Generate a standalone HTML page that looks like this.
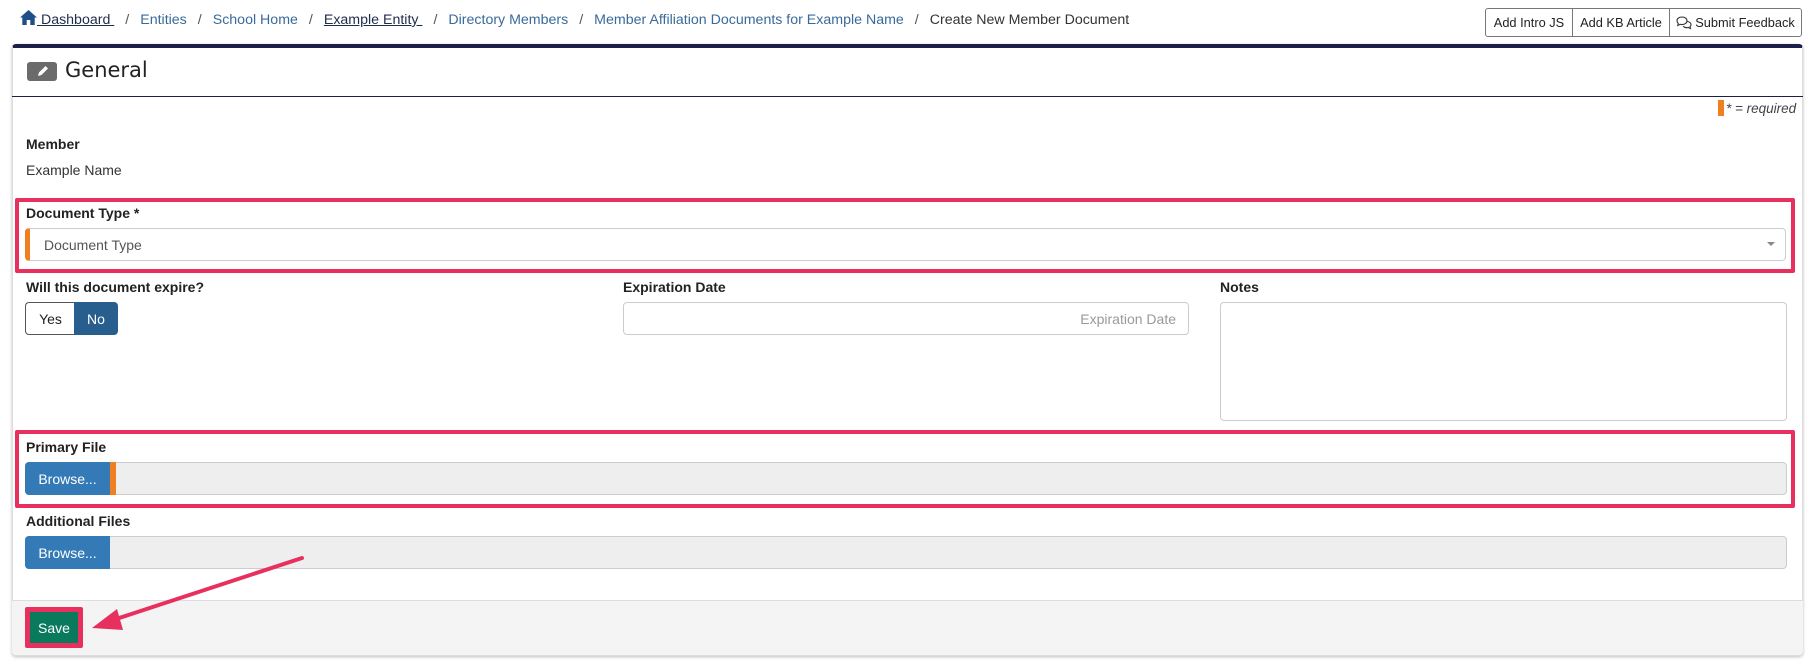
<!DOCTYPE html>
<html><head><meta charset="utf-8"><style>
*{box-sizing:border-box;margin:0;padding:0}
body{width:1815px;height:665px;background:#fff;font-family:"Liberation Sans",Arial,sans-serif;color:#333;position:relative;overflow:hidden;font-size:15px}
.a{position:absolute}
.bc{top:10px;left:20px;font-size:14.2px;color:#3a6a9a;white-space:nowrap}
.bc .s{color:#555;margin:0 11px}
.bc u{color:#1f2d4a}
.btns{top:8px;left:1485px;width:317px;height:29px;border:1px solid #777;border-radius:3px;display:flex;font-size:12.8px;color:#222}
.btns div{display:flex;align-items:center;justify-content:center;border-right:1px solid #777;height:100%}
.btns div:last-child{border-right:none}
.panel{left:12px;top:44px;width:1791px;height:612px;border:1px solid #ddd;border-top:4px solid #1c1f4a;border-radius:4px;box-shadow:0 1px 3px rgba(0,0,0,.25);background:#fff}
.lbl{font-weight:bold;font-size:14px;color:#222}
.inp{border:1px solid #ccc;border-radius:4px;background:#fff}
.red{border:4px solid #e8305f;border-radius:2px}
.browse{background:#337ab7;color:#fff;font-size:14px;display:flex;align-items:center;justify-content:center;border-radius:4px 0 0 4px}
.file{background:#eee;border:1px solid #ccc;border-radius:4px}
</style></head><body>
<div class="a bc"><svg width="17" height="15" viewBox="0 0 17 15" style="vertical-align:-1px"><path d="M8.5 0L0 7.5h2.3V15h4.4v-5h3.6v5h4.4V7.5H17z" fill="#1f4e89"/></svg><u> Dashboard </u><span class="s">/</span>Entities<span class="s">/</span>School Home<span class="s">/</span><u>Example Entity </u><span class="s">/</span>Directory Members<span class="s">/</span>Member Affiliation Documents for Example Name<span class="s">/</span><span style="color:#333">Create New Member Document</span></div>
<div class="a btns"><div style="width:87px">Add Intro JS</div><div style="width:97px">Add KB Article</div><div style="flex:1"><svg width="16" height="14" viewBox="0 0 16 14" style="margin-right:3px"><path d="M6 1C3 1 1 2.7 1 4.8c0 1 .5 1.9 1.3 2.6L1.8 9.5 4.3 8.3c.5.2 1.1.3 1.7.3 3 0 5-1.7 5-3.8S9 1 6 1z" fill="none" stroke="#333" stroke-width="1.1"/><path d="M11.5 5.5c2 .4 3.5 1.7 3.5 3.2 0 .8-.4 1.5-1 2l.5 1.8-2.1-1c-.5.1-.9.2-1.4.2-1.6 0-3-.6-3.8-1.6" fill="none" stroke="#333" stroke-width="1.1"/></svg>Submit Feedback</div></div>
<div class="a panel"></div>
<div class="a" style="left:12px;top:600px;width:1791px;height:55px;background:#f4f4f4;border-top:1px solid #ddd;border-radius:0 0 4px 4px"></div>
<div class="a" style="left:27px;top:62px;width:30px;height:19px;background:#6b6b6b;border-radius:3px"><svg width="30" height="19" viewBox="0 0 30 19"><path d="M11 14l1-3.5 6.5-6.5 2.5 2.5-6.5 6.5z" fill="#fff"/></svg></div>
<div class="a" style="left:65px;top:58px;font-size:21px;color:#222;font-family:'DejaVu Sans','Liberation Sans',sans-serif">General</div>
<div class="a" style="left:12px;top:96px;width:1791px;height:1px;background:#1c1f4a"></div>
<div class="a" style="left:1718px;top:100px;width:6px;height:16px;background:#f07f22"></div>
<div class="a" style="left:1726px;top:101px;font-size:13.5px;font-style:italic;color:#444">* = required</div>
<div class="a lbl" style="left:26px;top:136px">Member</div>
<div class="a" style="left:26px;top:162px;font-size:14px;color:#333">Example Name</div>
<div class="a red" style="left:15px;top:198px;width:1780px;height:75px"></div>
<div class="a lbl" style="left:26px;top:205px">Document Type *</div>
<div class="a inp" style="left:25px;top:228px;width:1761px;height:33px;border-left:5px solid #f07f22;color:#555;font-size:14px;padding:8px 0 0 14px">Document Type</div>
<div class="a" style="left:1767px;top:242px;border:4px solid transparent;border-top:4px solid #888;border-bottom:none"></div>
<div class="a lbl" style="left:26px;top:279px">Will this document expire?</div>
<div class="a" style="left:25px;top:302px;width:50px;height:33px;border:1px solid #555;border-right:none;border-radius:4px 0 0 4px;display:flex;align-items:center;justify-content:center;font-size:14px;color:#222">Yes</div>
<div class="a" style="left:74px;top:302px;width:44px;height:33px;background:#285e8e;border-radius:0 4px 4px 0;display:flex;align-items:center;justify-content:center;font-size:14px;color:#fff">No</div>
<div class="a lbl" style="left:623px;top:279px">Expiration Date</div>
<div class="a inp" style="left:623px;top:302px;width:566px;height:33px;color:#999;font-size:14px;text-align:right;padding:8px 12px 0 0">Expiration Date</div>
<div class="a lbl" style="left:1220px;top:279px">Notes</div>
<div class="a inp" style="left:1220px;top:302px;width:567px;height:119px"></div>
<div class="a red" style="left:15px;top:430px;width:1780px;height:78px"></div>
<div class="a lbl" style="left:26px;top:439px">Primary File</div>
<div class="a file" style="left:25px;top:462px;width:1762px;height:33px"></div>
<div class="a browse" style="left:25px;top:462px;width:85px;height:33px">Browse...</div>
<div class="a" style="left:110px;top:462px;width:6px;height:33px;background:#f07f22"></div>
<div class="a lbl" style="left:26px;top:513px">Additional Files</div>
<div class="a file" style="left:25px;top:536px;width:1762px;height:33px"></div>
<div class="a browse" style="left:25px;top:536px;width:85px;height:33px">Browse...</div>
<div class="a" style="left:25px;top:607px;width:58px;height:41px;border:4px solid #e8305f;border-radius:2px;background:#e8305f"></div>
<div class="a" style="left:30px;top:612px;width:48px;height:31px;background:#0a7a5c;color:#fff;font-size:14px;display:flex;align-items:center;justify-content:center">Save</div>
<svg class="a" style="left:0;top:0" width="1815" height="665"><line x1="302" y1="558" x2="110" y2="621" stroke="#e8305f" stroke-width="4" stroke-linecap="round"/><path d="M92 628l25-19 6 21z" fill="#e8305f"/></svg>
</body></html>
